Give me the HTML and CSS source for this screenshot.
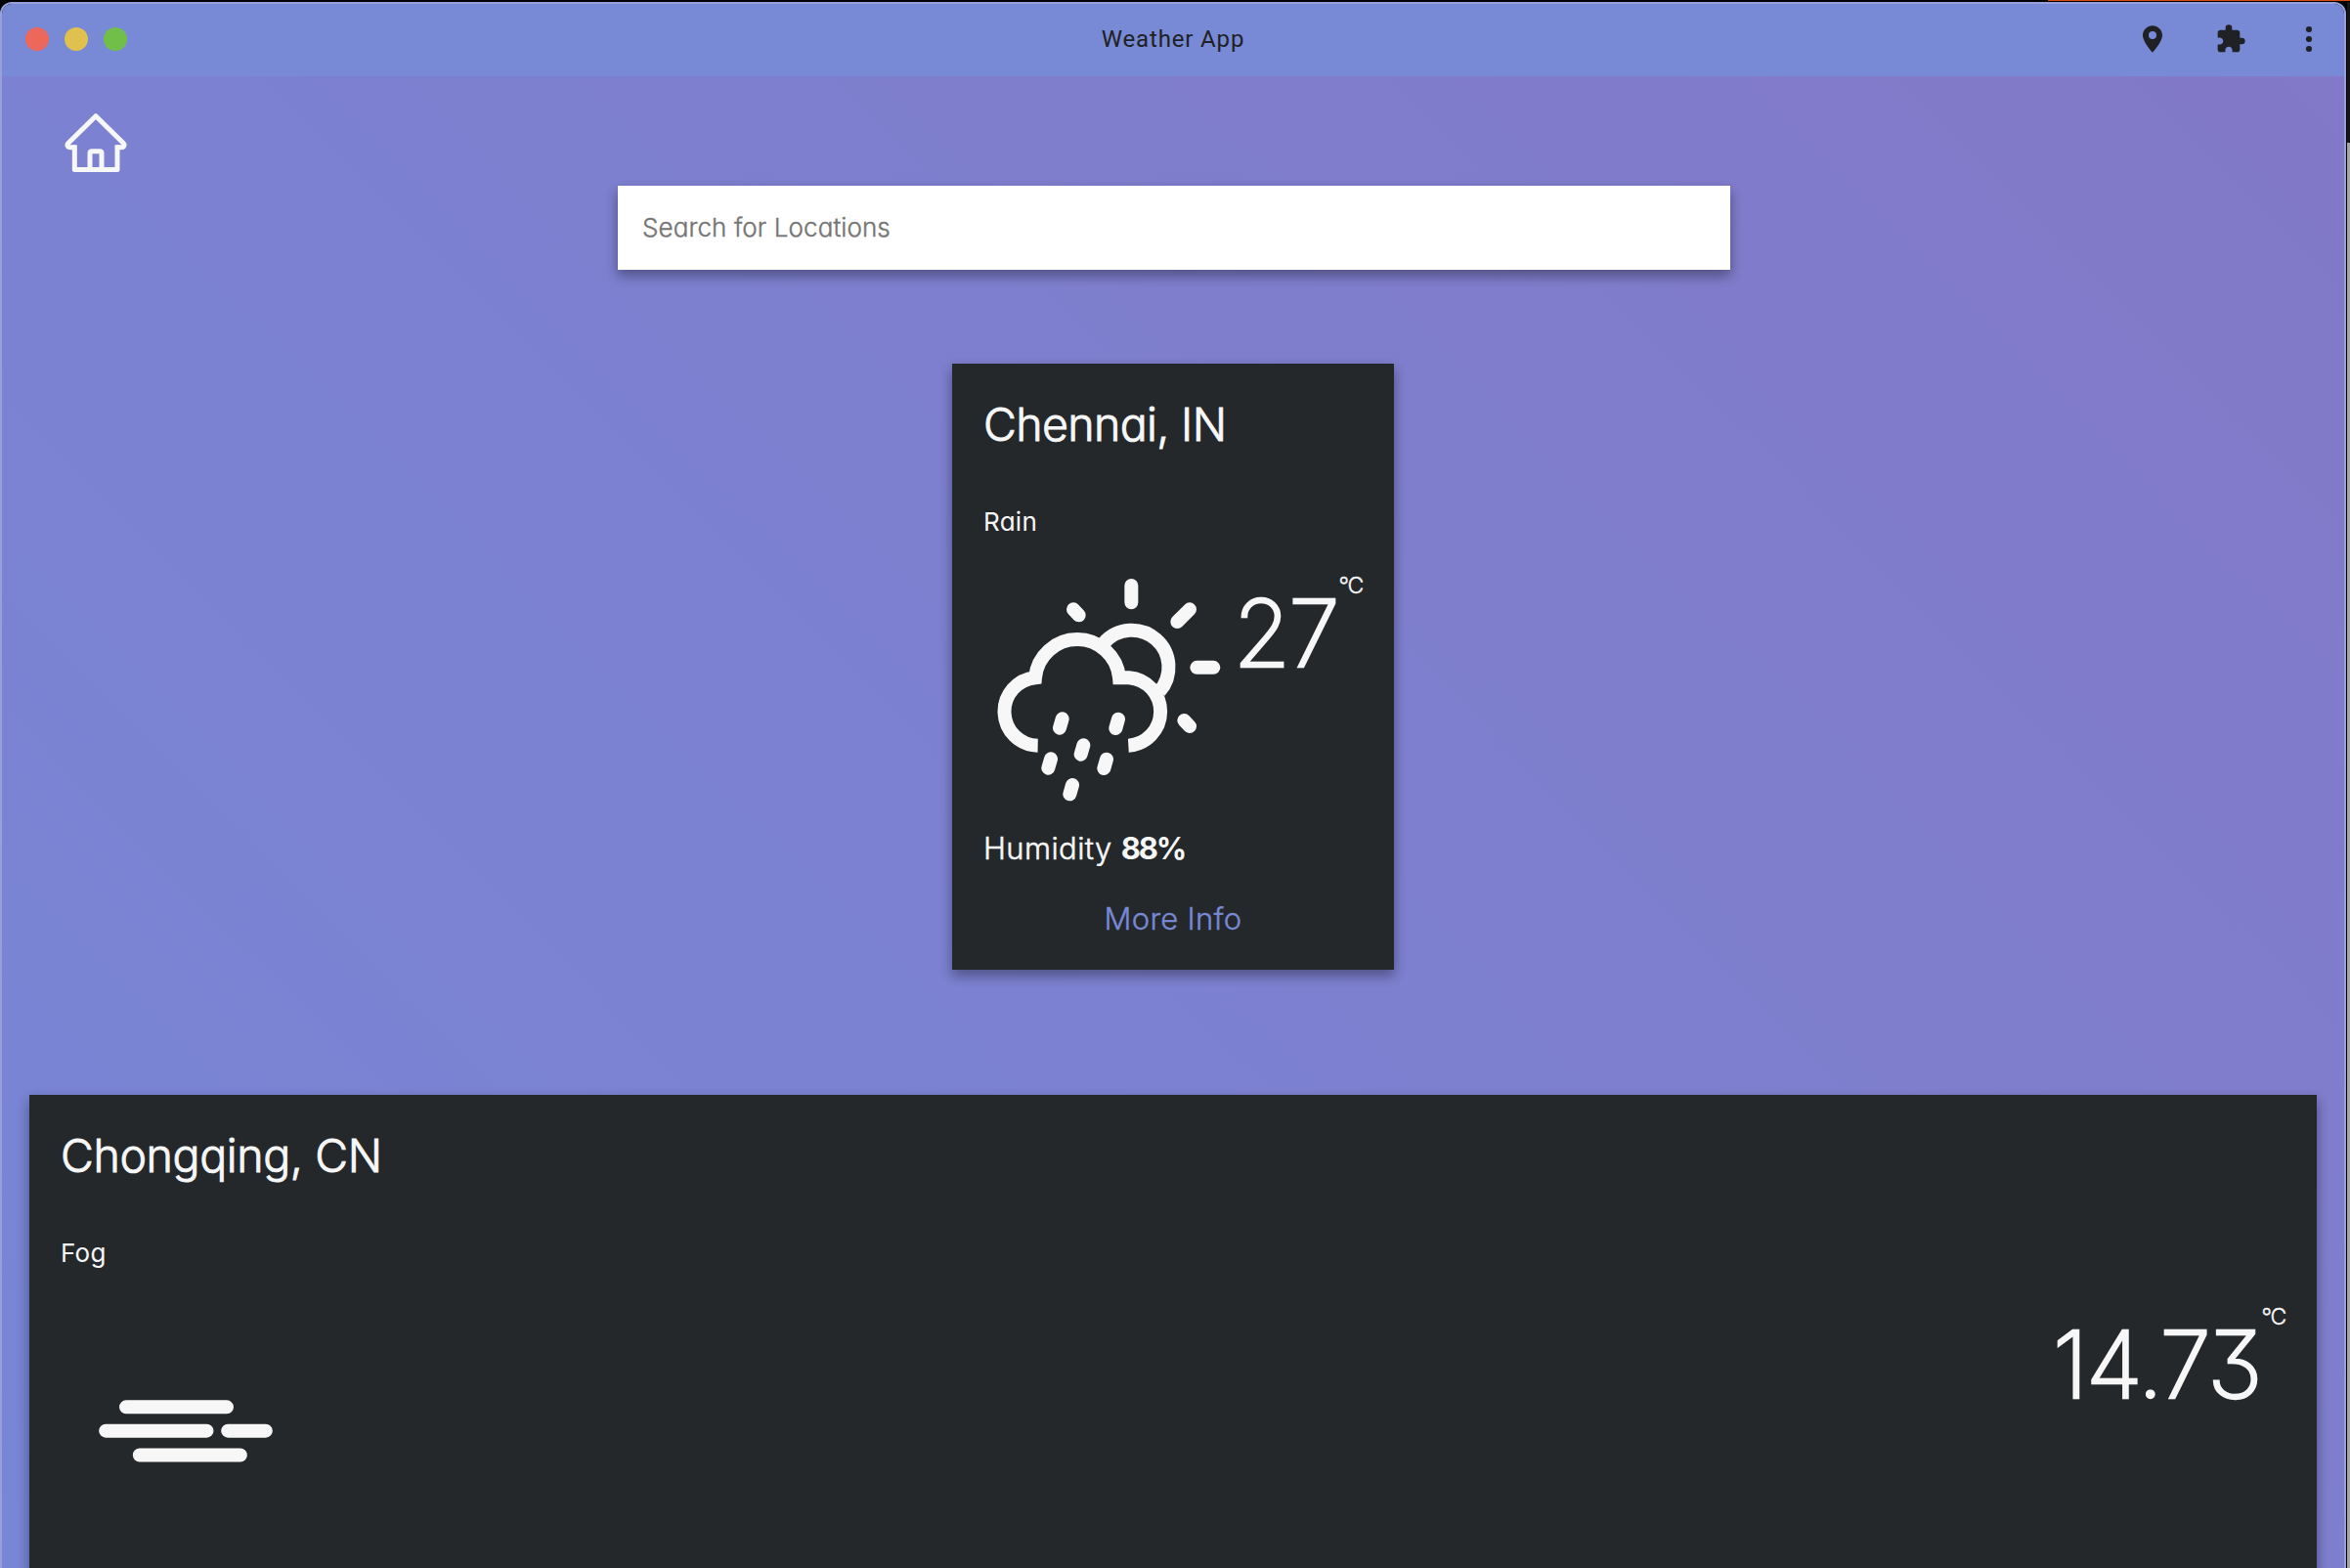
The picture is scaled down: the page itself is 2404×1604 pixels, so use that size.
FILE: index.html
```html
<!DOCTYPE html>
<html lang="en">
<head>
<meta charset="utf-8">
<title>Weather App</title>
<link rel="stylesheet" href="styles.css">
</head>
<body>
<div class="desktop">
  <div class="window">
    <header class="titlebar">
      <div class="lights"><span class="light close"></span><span class="light minimise"></span><span class="light zoom"></span></div>
      <div class="app-title"><span>Weather App</span></div>
      <div class="tools">
        <svg class="tool" viewBox="0 0 24 24"><path fill-rule="evenodd" d="M12 1.6C7.9 1.6 4.5 4.9 4.5 9c0 5.4 7.5 13.3 7.5 13.3S19.500 14.400 19.500 9c0-4.100-3.400-7.400-7.500-7.400zm0 10.400a3 3 0 1 1 0-6 3 3 0 0 1 0 6z"/></svg>
        <svg class="tool" viewBox="0 0 24 24"><path d="M20.500 11H19V7c0-1.100-.9-2-2-2h-4V3.500a2.500 2.500 0 0 0-5 0V5H4c-1.100 0-1.990.9-1.990 2v3.800H3.500c1.490 0 2.700 1.210 2.700 2.700s-1.210 2.700-2.700 2.700H2V20c0 1.100.9 2 2 2h3.800v-1.500c0-1.490 1.210-2.700 2.700-2.700s2.700 1.210 2.700 2.700V22H17c1.100 0 2-.9 2-2v-4h1.500a2.500 2.500 0 0 0 0-5z"/></svg>
        <svg class="tool" viewBox="0 0 24 24"><circle cx="12" cy="4.500" r="2.300"/><circle cx="12" cy="12" r="2.300"/><circle cx="12" cy="19.500" r="2.300"/></svg>
      </div>
    </header>
    <main class="page">
      <nav class="nav">
        <svg class="home" viewBox="189 339 210 198"><path d="M229 452h-13c-9 0-12-7-6-13l84-83 84 83c6 6 3 13-6 13h-13"/><path d="M229 445v75.500h131V445M276 520v-50q0-6 6-6h24q6 0 6 6v50"/></svg>
      </nav>
      <input class="search" type="text" placeholder="Search for Locations">
      <section class="card card-small">
        <h2 class="city city-chennai">Chennai, IN</h2>
        <p class="sky">Rain</p>
        <div class="reading">
          <svg class="weather" viewBox="138 31 744 780">
            <path d="M305 609A104.500 104.500 0 0 1 297 400.500A129.600 129.600 0 0 1 555 400.500H585A104.500 104.500 0 0 1 583 609"/>
            <path d="M508 294A113 113 0 1 1 678.600 442.700"/>
            <path class="round" d="M592 118v52M793 369.500h51M733 229l38-38M414 191l17 18M754 532l17 18"/>
            <path class="round" d="M380 527l-8 28M552 528l-8 28M445 608l-8 28M345 650l-8 28M516 651l-8 28M411 730l-8 28"/>
          </svg>
          <div class="temp"><span class="degrees">27</span><span class="unit">°C</span></div>
        </div>
        <p class="humidity">Humidity <b>88%</b></p>
        <a class="more">More Info</a>
      </section>
      <section class="card card-wide">
        <h2 class="city city-chongqing">Chongqing, CN</h2>
        <p class="sky">Fog</p>
        <div class="reading">
          <svg class="weather" viewBox="186 655 744 780">
            <path class="round" d="M387 1019h309M324.500 1092h310M699.500 1092h116M428.500 1166.500h309"/>
          </svg>
          <div class="temp"><span class="degrees decimal">14.73</span><span class="unit">°C</span></div>
        </div>
      </section>
    </main>
  </div>
  <aside class="backdrop"></aside>
</div>
</body>
</html>
```
FILE: styles.css
```css
* { box-sizing: border-box; }
body {
  margin: 0;
  height: 1604px;
  overflow: hidden;
  background: #000;
  font-family: Inter, "Open Sans", sans-serif;
  font-feature-settings: "cv11", "cv09";
  color: #f7f7f7;
  stroke-linejoin: round;
}
.desktop {
  display: flex;
  height: 1604px;
  padding-top: 2px;
  background: linear-gradient(#dc4a0c, #dc4a0c) 2095px 0 / 309px 1px no-repeat #000;
}
.window {
  display: flex;
  flex-direction: column;
  width: 2400px;
  height: 1640px;
  flex: none;
  border: 2px solid #979fdd;
  border-radius: 12px;
  overflow: hidden;
}
.backdrop {
  flex: 1;
  margin-left: 1px;
  height: 1602px;
  background: linear-gradient(#161616 144px, #a4a4a2 144px);
}
.titlebar {
  display: grid;
  grid-template-columns: 1fr auto 1fr;
  align-items: center;
  height: 74px;
  flex: none;
  padding: 0 20px 2px;
  background: #7889d5;
}
.lights { display: flex; gap: 16px; padding-left: 4px; }
.light { width: 24px; height: 24px; border-radius: 50%; }
.close { background: #ed675b; }
.minimise { background: #e0c14f; }
.zoom { background: #71bf48; }
.app-title {
  font: 24px/32px Roboto, sans-serif;
  letter-spacing: .85px;
  color: #202124;
}
.tools { display: flex; justify-content: flex-end; gap: 48px; }
.tool { width: 32px; height: 32px; fill: #202124; overflow: visible; }
.page {
  display: flex;
  flex-direction: column;
  align-items: center;
  flex: none;
  height: 1528px;
  background: linear-gradient(45deg, #7786d5, #7c81d1 40%, #7f7dcc 72%, #8279c8);
}
.nav { flex: none; align-self: flex-start; height: 112px; padding: 35px 0 0 61px; }
.home { display: block; width: 70px; height: 66px; fill: none; stroke: #f7f7f7; stroke-width: 15; }
.search {
  width: 1138px;
  height: 86px;
  flex: none;
  margin-left: 2px;
  padding: 0 25px 2px;
  border: 0;
  background: #fff;
  font: 300 26px/32px Inter, sans-serif;
  font-feature-settings: "cv11";
  letter-spacing: .1px;
  box-shadow: 0 6px 12px rgba(0, 0, 0, .16), 0 6px 12px rgba(0, 0, 0, .23);
}
.search::placeholder { color: #757575; opacity: 1; -webkit-text-stroke: .4px #757575; }
.card {
  display: flex;
  flex-direction: column;
  flex: none;
  padding: 32px 32px 0;
  background: #24282b;
  box-shadow: 0 6px 12px rgba(0, 0, 0, .16), 0 6px 12px rgba(0, 0, 0, .23);
}
.card-small { width: 452px; height: 620px; margin-top: 96px; }
.card-wide { width: 2340px; height: 620px; margin-top: 128px; }
.city {
  margin: 0 0 54px;
  font-size: 46.5px;
  font-weight: 300;
  line-height: 60px;
  white-space: nowrap;
  -webkit-text-stroke: .9px #f7f7f7;
}
.city-chennai { letter-spacing: -.65px; }
.city-chongqing { letter-spacing: -.4px; }
.sky { margin: 0 0 20px; font-size: 26px; font-weight: 400; line-height: 32px; letter-spacing: .3px; }
.reading { display: flex; justify-content: space-between; height: 260px; }
.weather { width: 248px; height: 260px; flex: none; fill: none; stroke: #f7f7f7; stroke-width: 42; stroke-linejoin: miter; }
.round { stroke-linecap: round; }
.temp { display: flex; gap: 1px; }
.degrees {
  margin-top: 28px;
  font-size: 94.5px;
  font-weight: 200;
  line-height: 100px;
  letter-spacing: -2px;
  -webkit-text-stroke: 2.4px #f7f7f7;
}
.unit { margin-top: 14px; font-size: 23px; font-weight: 300; line-height: 30px; letter-spacing: -1.2px; -webkit-text-stroke: .4px #f7f7f7; }
.humidity { margin: 18px 0 32px; font-size: 31px; font-weight: 300; line-height: 40px; letter-spacing: .4px; -webkit-text-stroke: .5px #f7f7f7; }
.humidity b { font-weight: 700; letter-spacing: -2.2px; -webkit-text-stroke: 0; }
.more { align-self: center; font-size: 31px; font-weight: 300; line-height: 40px; letter-spacing: .3px; color: #7889d5; -webkit-text-stroke: .4px #7889d5; }
```
